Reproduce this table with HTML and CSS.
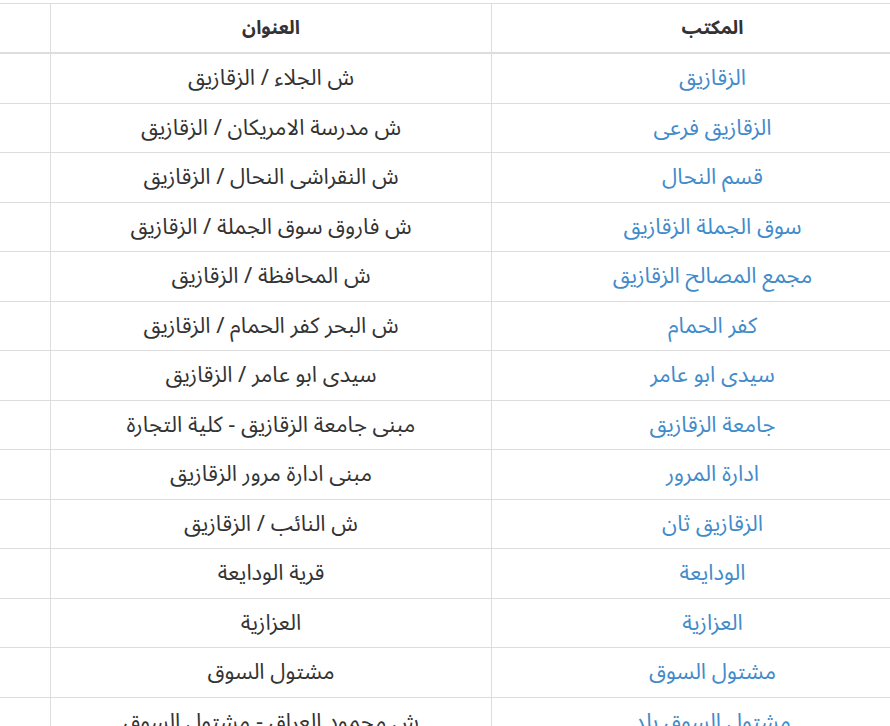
FILE: index.html
```html
<!DOCTYPE html>
<html lang="ar" dir="rtl">
<head>
<meta charset="utf-8">
<title>المكاتب</title>
<link rel="stylesheet" href="styles.css">
</head>
<body>
<div class="viewport">
<table class="offices">
<colgroup>
<col class="col-office">
<col class="col-address">
<col class="col-extra">
</colgroup>
<thead>
<tr><th>المكتب</th><th>العنوان</th><th></th></tr>
</thead>
<tbody>
<tr><td><a href="#">الزقازيق</a></td><td>ش الجلاء / الزقازيق</td><td></td></tr>
<tr><td><a href="#">الزقازيق فرعى</a></td><td>ش مدرسة الامريكان / الزقازيق</td><td></td></tr>
<tr><td><a href="#">قسم النحال</a></td><td>ش النقراشى النحال / الزقازيق</td><td></td></tr>
<tr><td><a href="#">سوق الجملة الزقازيق</a></td><td>ش فاروق سوق الجملة / الزقازيق</td><td></td></tr>
<tr><td><a href="#">مجمع المصالح الزقازيق</a></td><td>ش المحافظة / الزقازيق</td><td></td></tr>
<tr><td><a href="#">كفر الحمام</a></td><td>ش البحر كفر الحمام / الزقازيق</td><td></td></tr>
<tr><td><a href="#">سيدى ابو عامر</a></td><td>سيدى ابو عامر / الزقازيق</td><td></td></tr>
<tr><td><a href="#">جامعة الزقازيق</a></td><td>مبنى جامعة الزقازيق - كلية التجارة</td><td></td></tr>
<tr><td><a href="#">ادارة المرور</a></td><td>مبنى ادارة مرور الزقازيق</td><td></td></tr>
<tr><td><a href="#">الزقازيق ثان</a></td><td>ش النائب / الزقازيق</td><td></td></tr>
<tr><td><a href="#">الودايعة</a></td><td>قرية الودايعة</td><td></td></tr>
<tr><td><a href="#">العزازية</a></td><td>العزازية</td><td></td></tr>
<tr><td><a href="#">مشتول السوق</a></td><td>مشتول السوق</td><td></td></tr>
<tr><td><a href="#">مشتول السوق بلد</a></td><td>ش محمود العراق - مشتول السوق</td><td></td></tr>
</tbody>
</table>
</div>
</body>
</html>
```
FILE: styles.css
```css
html, body {
  margin: 0;
  padding: 0;
  background: #fff;
}
body {
  font-family: "Noto Sans Arabic", "DejaVu Sans", "Noto Sans", sans-serif;
  font-size: 18px;
  color: #333;
  overflow: hidden;
}
.viewport {
  width: 890px;
  height: 726px;
  overflow: hidden;
  padding-top: 3px;
  box-sizing: border-box;
}
.offices {
  border-collapse: collapse;
  table-layout: fixed;
  width: 983px;
  margin-right: -44px;
  border-top: 1px solid #ddd;
}
.col-office { width: 442px; }
.col-address { width: 441px; }
.col-extra { width: 100px; }
.offices th,
.offices td {
  text-align: center;
  vertical-align: middle;
  border-left: 1px solid #ddd;
  border-right: 1px solid #ddd;
  white-space: nowrap;
}
.offices th {
  padding: 12px 8px;
  line-height: 24px;
  font-size: 19px;
  font-weight: bold;
  border-bottom: 2px solid #ddd;
}
.offices td {
  padding: 12px 8px;
  line-height: 24.5px;
  font-size: 22px;
  border-bottom: 1px solid #ddd;
}
.offices a {
  color: #428bca;
  text-decoration: none;
}
```
